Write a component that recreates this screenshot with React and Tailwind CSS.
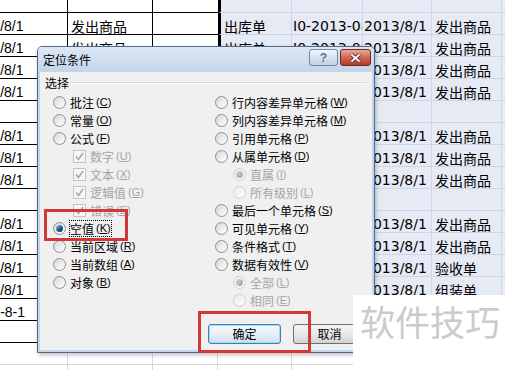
import React from "react";

const CJK = "font-['Noto_Sans_CJK_SC',sans-serif]";

const ROWS = [
  ["", "", "", "", "", "", ""],
  ["2013/8/1", "发出商品", "", "出库单", "I0-2013-08", "2013/8/1", "发出商品"],
  ["2013/8/1", "发出商品", "", "出库单", "I0-2013-08", "2013/8/1", "发出商品"],
  ["2013/8/1", "发出商品", "", "出库单", "I0-2013-08", "2013/8/1", "发出商品"],
  ["2013/8/1", "发出商品", "", "出库单", "I0-2013-08", "2013/8/1", "发出商品"],
  ["", "", "", "", "", "", ""],
  ["2013/8/1", "发出商品", "", "出库单", "I0-2013-08", "2013/8/1", "发出商品"],
  ["2013/8/1", "发出商品", "", "出库单", "I0-2013-08", "2013/8/1", "发出商品"],
  ["2013/8/1", "发出商品", "", "出库单", "I0-2013-08", "2013/8/1", "发出商品"],
  ["", "", "", "", "", "", ""],
  ["2013/8/1", "发出商品", "", "出库单", "I0-2013-08", "2013/8/1", "发出商品"],
  ["2013/8/1", "发出商品", "", "出库单", "I0-2013-08", "2013/8/1", "发出商品"],
  ["2013/8/1", "验收单", "", "验收单", "I0-2013-08", "2013/8/1", "验收单"],
  ["2013/8/1", "组装单", "", "组装单", "I0-2013-08", "2013/8/1", "组装单"],
  ["2013-8-1", "", "", "", "", "", ""],
  ["", "", "", "", "", "", ""],
];

const COLS = [
  { w: "w-[101px]", side: "L", text: "pl-[2px] font-['Liberation_Sans',sans-serif] text-[14px]" },
  { w: "w-[85px]", side: "L", text: `pl-[3px] ${CJK} text-[14px]` },
  { w: "w-[65px]", side: "L", last: true, text: "" },
  { w: "w-[74px]", side: "R", first: true, text: `pl-[3px] ${CJK} text-[14px]` },
  { w: "w-[71px]", side: "R", text: "pl-[1px] font-['DejaVu_Sans',sans-serif] text-[14px]" },
  { w: "w-[69px]", side: "R", text: "pl-[1px] font-['DejaVu_Sans',sans-serif] text-[14px]" },
  { w: "w-[70px]", side: "R", text: `pl-[3px] ${CJK} text-[14px]` },
  { w: "w-[60px]", side: "R", text: "" },
];

function cellBorder(col, plain) {
  if (plain) return "border-b border-r border-[#d9d9d9] bg-white";
  if (col.side === "L") {
    return col.last ? "border-b border-black bg-white" : "border-b border-r border-black bg-white";
  }
  const base = "bg-[#e6eaf4] border-b border-r border-b-[#cdd4e3] border-r-[#cdd4e3]";
  return col.first ? `${base} border-l-[3px] border-l-black` : base;
}

function Sheet() {
  const rows = [...ROWS, ["", "", "", "", "", "", ""], ["", "", "", "", "", "", ""]];
  return (
    <div className="ml-[-33px] flex flex-col">
      {rows.map((row, i) => (
        <div key={i} className={`flex ${i === 0 ? "h-[13px]" : "h-[22px]"}`}>
          {COLS.map((col, j) => (
            <div
              key={j}
              className={`flex shrink-0 items-end overflow-hidden whitespace-nowrap leading-[15px] text-black ${col.w} ${col.text} ${cellBorder(col, i >= ROWS.length)}`}
            >
              {row[j] || ""}
            </div>
          ))}
        </div>
      ))}
    </div>
  );
}

function Radio({ checked, disabled }) {
  return (
    <span
      className={`flex h-[13px] w-[13px] shrink-0 items-center justify-center rounded-full border ${
        disabled
          ? "border-[#cfd1d3] bg-linear-to-br from-[#ececec] to-[#fafafa]"
          : "border-[#8c9196] bg-linear-to-br from-[#d3d5d8] via-[#ececec] to-white"
      }`}
    >
      {checked && (
        <span
          className={`h-[7px] w-[7px] rounded-full ${
            disabled
              ? "bg-linear-to-br from-[#d8d8d8] to-[#9c9c9c]"
              : "bg-linear-to-br from-[#8fcdf5] via-[#22629a] to-[#0a2a4d]"
          }`}
        />
      )}
    </span>
  );
}

function Check() {
  return (
    <span className="flex h-[13px] w-[13px] shrink-0 items-center justify-center border border-[#c4c4c4] bg-[#f6f6f6]">
      <svg width="9" height="9" viewBox="0 0 9 9">
        <path d="M1 4.5 L3.5 7.5 L8 1" fill="none" stroke="#a8a8a8" strokeWidth="1.6" />
      </svg>
    </span>
  );
}

function Option({ label, k, check, checked, disabled, indent, focus }) {
  return (
    <div className={`flex h-[18px] items-center ${indent || ""}`}>
      {check ? <Check /> : <Radio checked={checked} disabled={disabled} />}
      <span
        className={`ml-[4px] flex items-center leading-[15px] ${disabled ? "text-[#a5a5a5]" : "text-black"} ${
          focus ? "outline-1 outline-dotted outline-black" : ""
        }`}
      >
        {label}
        <span className="ml-[2px] font-['Liberation_Sans',sans-serif] text-[11px]">
          (<span className="underline">{k}</span>)
        </span>
      </span>
    </div>
  );
}

function Dialog() {
  return (
    <div className={`absolute left-[37px] top-[46px] flex h-[307px] w-[338px] flex-col rounded-t-[5px] border border-[#52698a] bg-[#c4d5ea] text-[12px] shadow-[1px_2px_4px_rgba(0,0,0,0.25)] ${CJK}`}>
      {/* title bar */}
      <div className="flex h-[25px] items-start justify-between rounded-t-[4px] bg-linear-to-b from-[#dde8f5] to-[#c3d4ea] pl-[5px] pr-[3px] pt-[2px]">
        <span className="mt-[4px] leading-[14px] text-black">定位条件</span>
        <div className="flex gap-[2px]">
          <div className="flex h-[17px] w-[29px] items-center justify-center rounded-[3px] border border-[#7087a5] bg-linear-to-b from-[#f1f6fb] via-[#d6e2f0] to-[#bfd1e7] font-['Liberation_Sans',sans-serif] text-[12px] font-bold text-[#5b7391]">
            ?
          </div>
          <div className="flex h-[17px] w-[31px] items-center justify-center rounded-[3px] border border-[#6b2a20] bg-linear-to-b from-[#eaa99b] via-[#d0675a] to-[#b53a27]">
            <svg width="13" height="10" viewBox="0 0 13 10">
              <path d="M2.5 1.5 L10.5 8.5 M10.5 1.5 L2.5 8.5" stroke="#4a1a12" strokeWidth="3.6" />
              <path d="M2.5 1.5 L10.5 8.5 M10.5 1.5 L2.5 8.5" stroke="#ffffff" strokeWidth="2" />
            </svg>
          </div>
        </div>
      </div>

      {/* body */}
      <div className="mx-[2px] mb-[2px] flex flex-1 flex-col bg-[#f0f0f0] pt-[3px]">
        <div className="flex h-[16px] items-center pl-[5px] pr-[5px]">
          <span className="leading-[16px] text-black">选择</span>
          <span className="ml-[2px] h-[2px] flex-1 border-b border-t border-b-white border-t-[#d5dde5]" />
        </div>

        <div className="mt-[2px] flex pl-[13px]">
          <div className="flex w-[162px] flex-col">
            <Option label="批注" k="C" />
            <Option label="常量" k="O" />
            <Option label="公式" k="F" />
            <Option label="数字" k="U" check disabled indent="pl-[20px]" />
            <Option label="文本" k="X" check disabled indent="pl-[20px]" />
            <Option label="逻辑值" k="G" check disabled indent="pl-[20px]" />
            <Option label="错误" k="E" check disabled indent="pl-[20px]" />
            <Option label="空值" k="K" checked focus />
            <Option label="当前区域" k="R" />
            <Option label="当前数组" k="A" />
            <Option label="对象" k="B" />
          </div>
          <div className="flex flex-col">
            <Option label="行内容差异单元格" k="W" />
            <Option label="列内容差异单元格" k="M" />
            <Option label="引用单元格" k="P" />
            <Option label="从属单元格" k="D" />
            <Option label="直属" k="I" checked disabled indent="pl-[18px]" />
            <Option label="所有级别" k="L" disabled indent="pl-[18px]" />
            <Option label="最后一个单元格" k="S" />
            <Option label="可见单元格" k="Y" />
            <Option label="条件格式" k="T" />
            <Option label="数据有效性" k="V" />
            <Option label="全部" k="L" checked disabled indent="pl-[18px]" />
            <Option label="相同" k="E" disabled indent="pl-[18px]" />
          </div>
        </div>

        <div className="mt-[15px] flex justify-end gap-[12px] pr-[6px]">
          <button className="flex h-[20px] w-[73px] items-center justify-center rounded-[3px] border border-[#3c7fb1] bg-linear-to-b from-[#f4f9fd] via-[#e6f0f8] to-[#cfdfee] text-[12px] text-black shadow-[inset_0_0_0_1px_#a9d8f5]">
            确定
          </button>
          <button className="flex h-[20px] w-[73px] items-center justify-center rounded-[3px] border border-[#707070] bg-linear-to-b from-[#f3f3f3] via-[#e8e8e8] to-[#d2d2d2] text-[12px] text-black">
            取消
          </button>
        </div>
      </div>
    </div>
  );
}

export default function App() {
  return (
    <div className="relative h-[370px] w-[505px] overflow-hidden bg-white">
      <Sheet />
      <Dialog />

      {/* annotation boxes */}
      <div className="absolute left-[44px] top-[209px] h-[32px] w-[84px] border-[3px] border-[#d0383a]" />
      <div className="absolute left-[198px] top-[311px] h-[42px] w-[113px] border-[3px] border-[#d0383a]" />

      {/* watermark */}
      <div className={`absolute left-[353px] top-[295px] h-[75px] w-[152px] bg-white pl-[7px] pt-[8px] text-[35px] leading-none text-[#cbcbcb] ${CJK}`}>
        软件技巧
      </div>
    </div>
  );
}
